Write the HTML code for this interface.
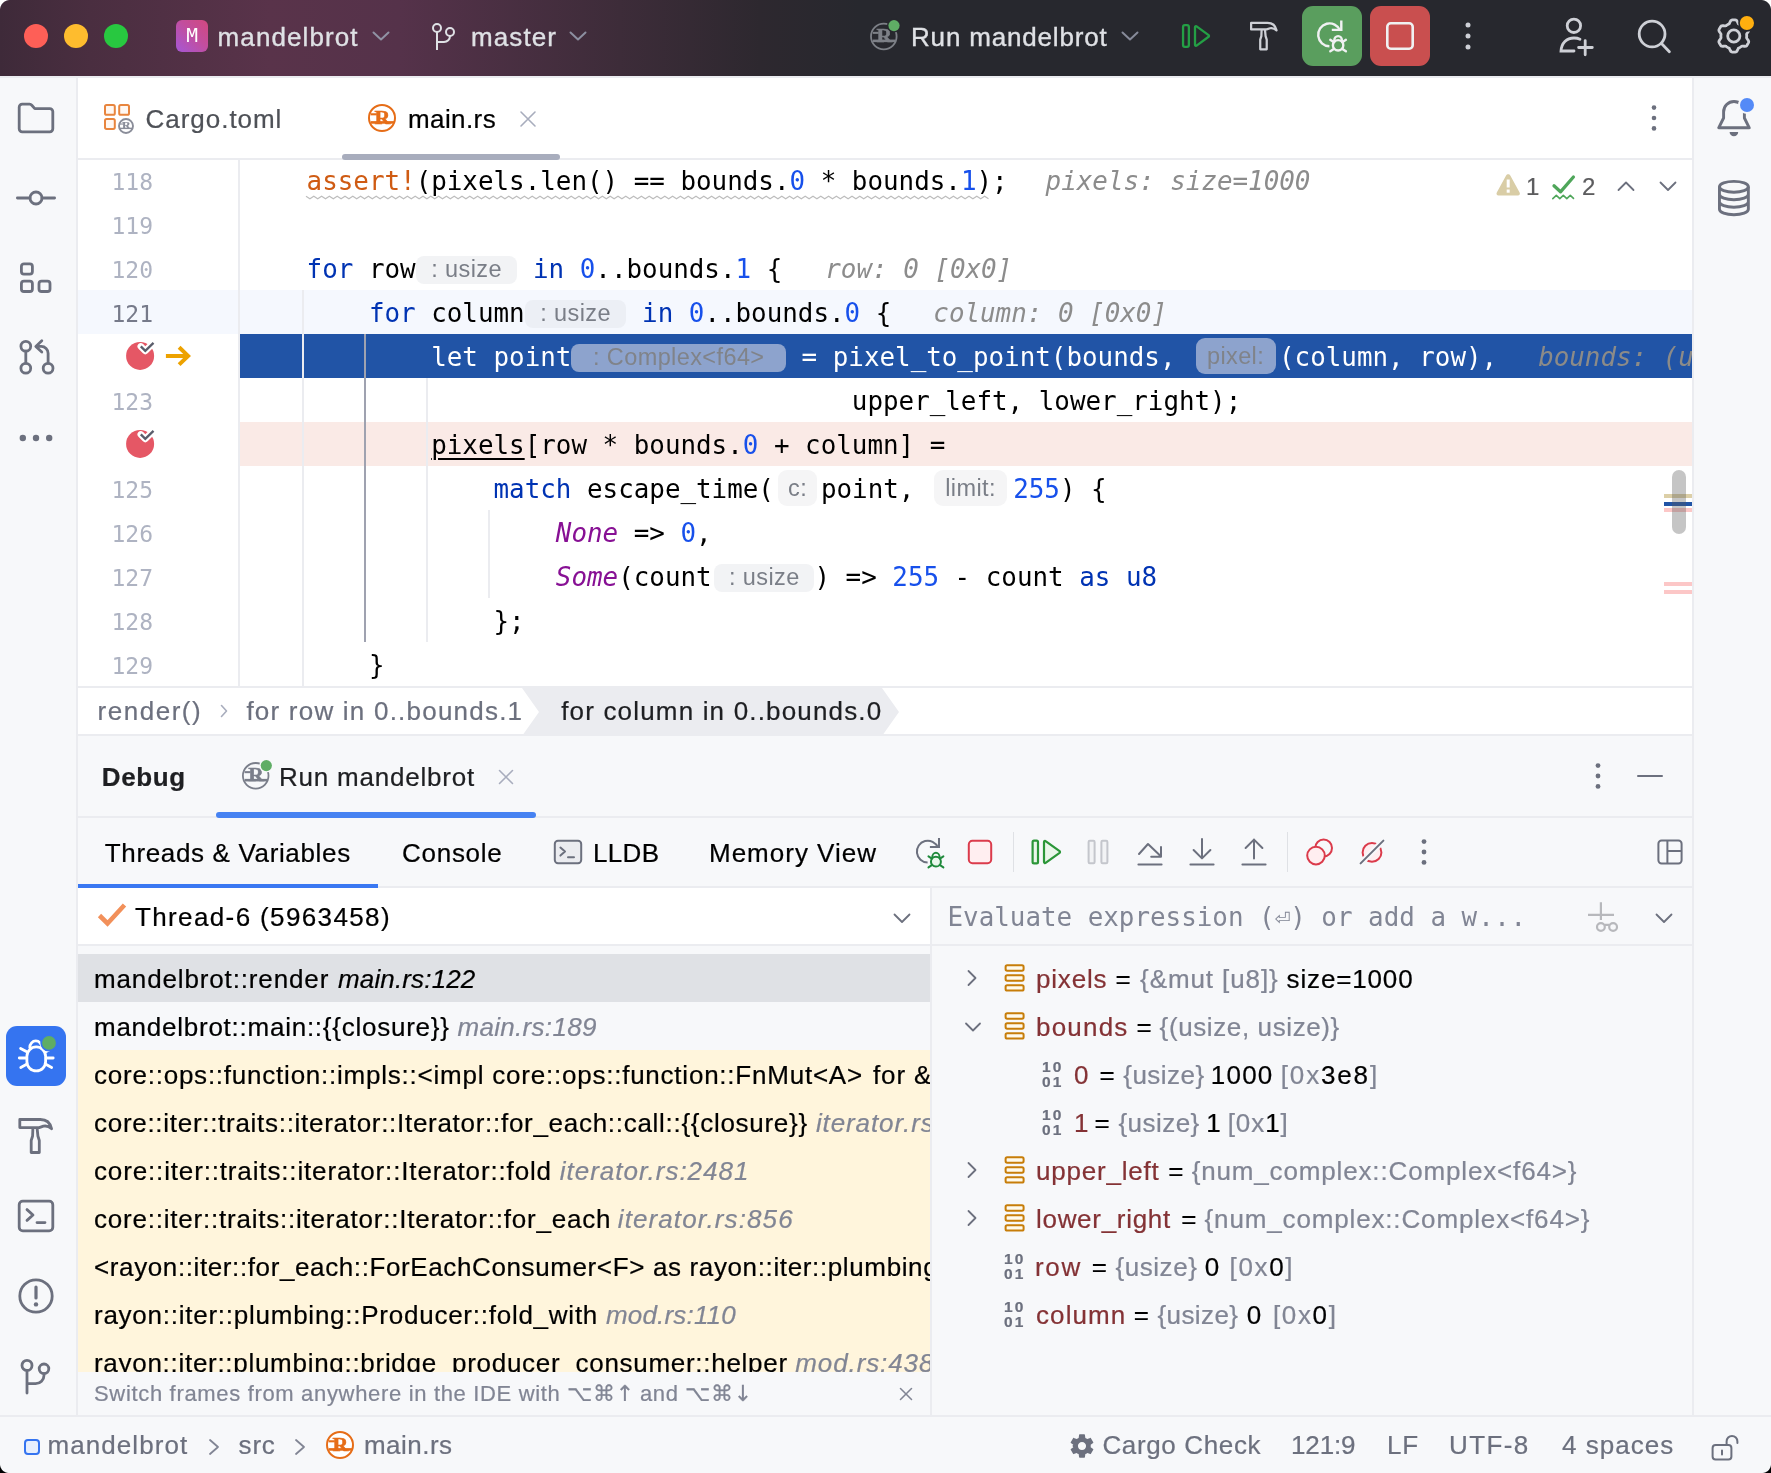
<!DOCTYPE html>
<html lang="en">
<head>
<meta charset="utf-8">
<title>mandelbrot – main.rs</title>
<style>
*{box-sizing:border-box;margin:0;padding:0}
html,body{width:1771px;height:1473px;overflow:hidden;background:#f7f8fa}
body{font-family:"Liberation Sans",sans-serif;font-size:26px;color:#000;position:relative;-webkit-text-stroke:.22px}
.abs{position:absolute}
svg{position:absolute;overflow:visible}
body>div{will-change:transform}
.t{position:absolute;white-space:pre;line-height:40px;height:40px;font-size:26px;letter-spacing:.9px}
.mono{font-family:"DejaVu Sans Mono","Liberation Mono",monospace;-webkit-text-stroke:0}
/* ---------- title bar ---------- */
#title{left:0;top:0;width:1771px;height:76px;background:#27282e;overflow:hidden}
#title .grad{left:0;top:0;width:900px;height:76px;background:linear-gradient(90deg,#3e2a39 0,#4a2e40 90px,#59334a 270px,#55324a 400px,#3d2c39 620px,#2d282f 760px,#27282e 860px)}
#title .t{color:#dfe1e5;-webkit-text-stroke:.35px}
/* ---------- strips ---------- */
#lstrip{left:0;top:76px;width:78px;height:1341px;background:#f7f8fa;border-right:2px solid #ebecf0}
#rstrip{left:1692px;top:76px;width:79px;height:1341px;background:#f7f8fa;border-left:2px solid #ebecf0}
/* ---------- editor tabs ---------- */
#tabs{z-index:3;left:78px;top:76px;width:1614px;height:84px;background:#fff;border-bottom:2px solid #ebecf0;border-top:2px solid #ebecf0}
/* ---------- editor ---------- */
#editor{left:78px;top:158px;width:1614px;height:530px;background:#fff;overflow:hidden;border-bottom:2px solid #ebecf0}
.row{position:absolute;left:0;width:1614px;height:44px}
.ln{position:absolute;right:1539px;top:2px;line-height:44px;font-size:23px;color:#aeb3c2;letter-spacing:0;white-space:pre}
.code{position:absolute;left:228.6px;top:1px;height:44px;line-height:44px;font-size:25.88px;white-space:pre;color:#000}
.kw{color:#0033b3}.num{color:#1750eb}.mac{color:#cf5b13}.en{color:#871094;font-style:italic}
.dbgv{color:#8c8c8c;font-style:italic}
.hint{display:inline-block;position:relative;height:28px;line-height:26px;top:9px;border-radius:8px;background:#f2f3f5;color:#7a7e87;font-family:"Liberation Sans",sans-serif;font-size:23.5px;letter-spacing:.4px;text-align:center;vertical-align:top;overflow:hidden}
.ph{height:36px;line-height:36px;top:3px;border-radius:9px;background:#f5f5f6}
.wavy{}
.guide{position:absolute;width:2px;background:#ebecf0}
/* ---------- breadcrumbs ---------- */
#crumbs{left:78px;top:688px;width:1614px;height:48px;background:#fff;border-bottom:2px solid #ebecf0}
/* ---------- debug ---------- */
#dhead{left:78px;top:736px;width:1614px;height:82px;background:#f7f8fa;border-bottom:2px solid #ebecf0}
#dtabs{left:78px;top:818px;width:1614px;height:70px;background:#f7f8fa;border-bottom:2px solid #ebecf0}
#frames{left:78px;top:888px;width:852px;height:529px;background:#f7f8fa;overflow:hidden}
#vars{left:930px;top:888px;width:762px;height:529px;background:#f7f8fa;border-left:2px solid #ebecf0;overflow:hidden}
.fr{position:absolute;left:0;width:852px;height:48px;line-height:48px;font-size:26px;letter-spacing:.9px;white-space:pre;padding-left:17px;padding-top:1px;overflow:hidden}
.fr i{color:#818594}
.lib{background:#fff5dc}
.vr{position:absolute;left:0;margin-top:1px;height:48px;line-height:48px;font-size:26px;letter-spacing:.9px;white-space:pre}
.vn{color:#843235}.vg{color:#818594}
.bin{position:absolute;font-family:"Liberation Sans",sans-serif;font-weight:bold;font-size:15.500px;line-height:15.600px;color:#6c707e;letter-spacing:2.200px;white-space:pre}
/* ---------- status ---------- */
#status{left:0;top:1415px;width:1771px;height:58px;background:#f7f8fa;border-top:2px solid #ebecf0}
#status .t{color:#6c707e}
.corner{position:absolute;width:10px;height:10px}
#t_proj{left:217.6px!important;letter-spacing:1.09px!important}
#t_branch{left:471.0px!important;letter-spacing:1.1px!important}
#t_run{left:911.0px!important;letter-spacing:0.82px!important}
#t_cargo{left:67.6px!important;letter-spacing:0.96px!important}
#t_main{left:330.0px!important;letter-spacing:0.4px!important}
#t_c1{left:19.6px!important;letter-spacing:1.51px!important}
#t_c2{left:168.4px!important;letter-spacing:1.22px!important}
#t_c3{left:483.2px!important;letter-spacing:1.17px!important}
#t_debug{left:23.8px!important;letter-spacing:0.6px!important}
#t_runm{left:201.0px!important;letter-spacing:0.79px!important}
#t_tv{left:26.8px!important;letter-spacing:0.65px!important}
#t_console{left:324.0px!important;letter-spacing:0.73px!important}
#t_lldb{left:515.0px!important;letter-spacing:0.32px!important}
#t_mem{left:631.0px!important;letter-spacing:1.0px!important}
#t_thread{left:57.0px!important;letter-spacing:1.37px!important}
#t_s1{left:47.6px!important;letter-spacing:1.05px!important}
#t_s2{left:238.6px!important;letter-spacing:0.8px!important}
#t_s3{left:364.0px!important;letter-spacing:0.46px!important}
#t_s4{left:1102.4px!important;letter-spacing:0.64px!important}
#t_s5{left:1291.0px!important;letter-spacing:-0.12px!important}
#t_s6{left:1387.0px!important;letter-spacing:0.9px!important}
#t_s7{left:1449.0px!important;letter-spacing:1.4px!important}
#t_s8{left:1562.0px!important;letter-spacing:1.01px!important}
#f1a{margin-left:-1.0px!important;letter-spacing:0.86px!important}
#f1b{margin-left:8.8px!important;letter-spacing:0.15px!important}
#f2a{margin-left:-1.0px!important;letter-spacing:0.75px!important}
#f2b{margin-left:7.9px!important;letter-spacing:0.3px!important}
#f3a{margin-left:-1.0px!important;letter-spacing:0.77px!important}
#f3b{margin-left:10.0px!important;letter-spacing:0.9px!important}
#f4a{margin-left:-1.0px!important;letter-spacing:0.71px!important}
#f4b{margin-left:8.1px!important;letter-spacing:0.9px!important}
#f5a{margin-left:-1.0px!important;letter-spacing:0.85px!important}
#f5b{margin-left:7.9px!important;letter-spacing:0.98px!important}
#f6a{margin-left:-1.0px!important;letter-spacing:0.78px!important}
#f6b{margin-left:6.6px!important;letter-spacing:1.1px!important}
#f7a{margin-left:-1.0px!important;letter-spacing:0.61px!important}
#f7b{margin-left:8.0px!important;letter-spacing:0.63px!important}
#f8a{margin-left:-1.0px!important;letter-spacing:0.75px!important}
#f8b{margin-left:7.9px!important;letter-spacing:0.18px!important}
#f9a{margin-left:-1.0px!important;letter-spacing:0.71px!important}
#f9b{margin-left:7.5px!important;letter-spacing:0.9px!important}
#v1a{margin-left:-2.0px!important;letter-spacing:0.8px!important}
#v1b{margin-left:8.2px!important;letter-spacing:0.9px!important}
#v1c{margin-left:8.5px!important;letter-spacing:0.9px!important}
#v1d{margin-left:8.0px!important;letter-spacing:0.84px!important}
#v2a{margin-left:-2.0px!important;letter-spacing:1.2px!important}
#v2b{margin-left:8.0px!important;letter-spacing:0.9px!important}
#v2c{margin-left:7.0px!important;letter-spacing:0.61px!important}
#v3a{margin-left:-2.0px!important;letter-spacing:0.9px!important}
#v3b{margin-left:10.0px!important;letter-spacing:0.9px!important}
#v3c{margin-left:7.8px!important;letter-spacing:0.48px!important}
#v3d{margin-left:6.1px!important;letter-spacing:1.23px!important}
#v3e{margin-left:7.2px!important;letter-spacing:1.85px!important}
#v4a{margin-left:-2.0px!important;letter-spacing:0.9px!important}
#v4b{margin-left:5.0px!important;letter-spacing:0.9px!important}
#v4c{margin-left:8.0px!important;letter-spacing:0.46px!important}
#v4d{margin-left:6.6px!important;letter-spacing:0.9px!important}
#v4e{margin-left:6.0px!important;letter-spacing:0.9px!important}
#v5a{margin-left:-2.0px!important;letter-spacing:0.79px!important}
#v5b{margin-left:8.6px!important;letter-spacing:0.9px!important}
#v5c{margin-left:7.4px!important;letter-spacing:0.85px!important}
#v6a{margin-left:-2.0px!important;letter-spacing:0.7px!important}
#v6b{margin-left:10.3px!important;letter-spacing:0.9px!important}
#v6c{margin-left:7.3px!important;letter-spacing:0.85px!important}
#v7a{margin-left:-3.0px!important;letter-spacing:1.65px!important}
#v7b{margin-left:10.0px!important;letter-spacing:0.9px!important}
#v7c{margin-left:7.5px!important;letter-spacing:0.56px!important}
#v7d{margin-left:7.2px!important;letter-spacing:0.9px!important}
#v7e{margin-left:9.6px!important;letter-spacing:1.65px!important}
#v8a{margin-left:-2.0px!important;letter-spacing:1.1px!important}
#v8b{margin-left:7.4px!important;letter-spacing:0.9px!important}
#v8c{margin-left:7.6px!important;letter-spacing:0.4px!important}
#v8d{margin-left:8.3px!important;letter-spacing:0.9px!important}
#v8e{margin-left:10.9px!important;letter-spacing:1.65px!important}
#t_hint{left:16.0px!important;letter-spacing:0.67px!important}
#f7b{letter-spacing:.63px!important}
</style>
</head>
<body>
<div id="title" class="abs">
 <div class="grad abs"></div>
 <div class="abs" style="left:24px;top:24px;width:24px;height:24px;border-radius:50%;background:#fe5f57"></div>
 <div class="abs" style="left:64px;top:24px;width:24px;height:24px;border-radius:50%;background:#febc2e"></div>
 <div class="abs" style="left:104px;top:24px;width:24px;height:24px;border-radius:50%;background:#28c840"></div>
 <div class="abs mono" style="left:176px;top:20px;width:32px;height:32px;border-radius:6px;background:linear-gradient(45deg,#a557d6 0,#c24e9e 55%,#d1487f 100%);color:#fff;font-size:19.500px;line-height:32px;text-align:center">M</div>
 <div class="t" id="t_proj" style="left:218px;top:17px">mandelbrot</div>
 <svg style="left:372px;top:29px" width="18" height="14" viewBox="0 0 18 14"><path d="M1.5 3.5 9 10.5 16.5 3.5" fill="none" stroke="#9092a4" stroke-width="2" stroke-linecap="round" stroke-linejoin="round"/></svg>
 <svg style="left:428px;top:20px" width="32" height="32" viewBox="0 0 16 16"><g fill="none" stroke="#dfe1e5" stroke-width="1"><circle cx="4.5" cy="4" r="2"/><circle cx="11" cy="6" r="2"/><path d="M4.5 6v9M4.5 11h3.5a3 3 0 0 0 3-3"/></g></svg>
 <div class="t" id="t_branch" style="left:472px;top:17px">master</div>
 <svg style="left:569px;top:29px" width="18" height="14" viewBox="0 0 18 14"><path d="M1.5 3.5 9 10.5 16.5 3.5" fill="none" stroke="#8c8fa0" stroke-width="2" stroke-linecap="round" stroke-linejoin="round"/></svg>
 <!-- run config -->
 <svg style="left:868px;top:20px" width="34" height="34" viewBox="868 20 34 34"><circle cx="883.8" cy="36.5" r="12.8" fill="none" stroke="#7d8087" stroke-width="1.8"/><text transform="translate(884.184 42.196) scale(1.120 1)" font-family="Liberation Serif,serif" font-weight="bold" font-size="19.2" text-anchor="middle" fill="#7d8087" stroke="#7d8087" stroke-width="0.448">R</text><path d="M872.792 40.852H895.576" stroke="#7d8087" stroke-width="2.56"/><path d="M872.792 32.852H878.68" stroke="#7d8087" stroke-width="2.048"/><circle cx="894" cy="25.600" r="7" fill="#27282e"/><circle cx="894" cy="25.600" r="5.600" fill="#5fad65"/></svg>
 <div class="t" id="t_run" style="left:912px;top:17px">Run mandelbrot</div>
 <svg style="left:1121px;top:29px" width="18" height="14" viewBox="0 0 18 14"><path d="M1.5 3.5 9 10.5 16.5 3.5" fill="none" stroke="#868a99" stroke-width="2" stroke-linecap="round" stroke-linejoin="round"/></svg>
 <svg style="left:1178px;top:20px" width="36" height="32" viewBox="1178 20 36 32"><g fill="none" stroke="#249f45" stroke-width="2.300" stroke-linejoin="round"><rect x="1183.050" y="25.150" width="5.800" height="21.700" rx="1.800"/><path d="M1195 27.200V44.800a1 1 0 0 0 1.600.800L1208.600 36.800a1 1 0 0 0 0-1.600L1196.600 26.400a1 1 0 0 0-1.600.800Z"/></g></svg>
 <svg style="left:1246px;top:18px" width="36" height="36" viewBox="1246 18 36 36"><g transform="translate(1250 21.7) scale(0.8)" fill="none" stroke="#ced0d6" stroke-width="2.8" stroke-linejoin="round"><path d="M1.4 1.5H22C28.5 1.5 32 5.500 33.200 10.800C30.500 8.300 27.500 7.600 25 8.200L20.800 9.600H1.400Z"/><path d="M14.500 10L14.200 18L12.800 22.500V34.500H20.900V22.500L19.500 18L18.700 10"/></g></svg>
 <div class="abs" style="left:1302px;top:6px;width:60px;height:60px;border-radius:11px;background:#5a9e5e"></div>
 <svg style="left:1312px;top:16px" width="40" height="40" viewBox="1312 16 40 40"><g transform="translate(1329.6 34.8) scale(1)" fill="none" stroke-width="2.4" stroke-linecap="butt" stroke-linejoin="miter"><path d="M10.500 -4.400A11.400 11.400 0 1 0 -0.200 11.400" stroke="#f0f1f2"/><path d="M11.700 -14.200V-4.900H2.200" stroke="#f0f1f2"/><g stroke="#f0f1f2" stroke-linecap="round"><circle cx="8.500" cy="10.500" r="5.200" fill="none"/><path d="M4.700 6.600V5.600A3.800 4.300 0 0 1 12.300 5.600V6.600"/><path d="M0.700 5L4.300 7.400M16.300 5L12.700 7.400M0.700 16.500L4.600 13.900M16.300 16.500L12.400 13.900"/></g></g></svg>
 <div class="abs" style="left:1370px;top:6px;width:60px;height:60px;border-radius:11px;background:#c94f4f"></div>
 <svg style="left:1380px;top:16px" width="40" height="40" viewBox="1380 16 40 40"><rect x="1387.300" y="23.300" width="25.400" height="25.400" rx="3.500" fill="none" stroke="#f0f1f2" stroke-width="2.600"/></svg>
 <svg style="left:1460px;top:18px" width="16" height="36" viewBox="1460 18 16 36"><g fill="#ced0d6"><circle cx="1468" cy="25" r="2.500"/><circle cx="1468" cy="36" r="2.500"/><circle cx="1468" cy="47" r="2.500"/></g></svg>
 <svg style="left:1554px;top:14px" width="44" height="46" viewBox="1554 14 44 46"><g fill="none" stroke="#ced0d6" stroke-width="2.800" stroke-linecap="round"><circle cx="1573.900" cy="25.800" r="6.700"/><path d="M1574 51H1561c.500-8 5.500-13 13-13c2.300 0 4.300.400 6 1.200M1585.200 40.600V54.800M1578.600 47.500H1592.300"/></g></svg>
 <svg style="left:1634px;top:16px" width="42" height="42" viewBox="1634 16 42 42"><g fill="none" stroke="#ced0d6" stroke-width="2.800" stroke-linecap="round"><circle cx="1652.100" cy="34" r="12.900"/><path d="M1661.500 43.500L1669.400 51.700"/></g></svg>
 <svg style="left:1712px;top:12px" width="48" height="48" viewBox="1712 12 48 48"><g fill="none" stroke="#ced0d6" stroke-width="2.800" stroke-linejoin="round"><path d="M1746.7 36L1746.69 35.44L1746.65 34.88L1746.59 34.32L1746.74 33.72L1747.27 33.01L1747.81 32.25L1748.3 31.43L1748.7 30.58L1748.67 29.84L1748.39 29.2L1748.08 28.57L1747.74 27.95L1747.38 27.35L1746.99 26.77L1746.57 26.2L1745.95 25.81L1745.01 25.73L1744.05 25.75L1743.12 25.83L1742.25 25.93L1741.65 25.77L1741.2 25.43L1740.73 25.12L1740.25 24.83L1739.76 24.56L1739.25 24.31L1738.74 24.08L1738.29 23.65L1737.95 22.84L1737.55 21.99L1737.09 21.16L1736.55 20.38L1735.9 20.04L1735.2 19.96L1734.5 19.92L1733.8 19.9L1733.1 19.92L1732.4 19.96L1731.7 20.04L1731.05 20.38L1730.51 21.16L1730.05 21.99L1729.65 22.84L1729.31 23.65L1728.86 24.08L1728.35 24.31L1727.84 24.56L1727.35 24.83L1726.87 25.12L1726.4 25.43L1725.95 25.77L1725.35 25.93L1724.48 25.83L1723.55 25.75L1722.59 25.73L1721.65 25.81L1721.03 26.2L1720.61 26.77L1720.22 27.35L1719.86 27.95L1719.52 28.57L1719.21 29.2L1718.93 29.84L1718.9 30.58L1719.3 31.43L1719.79 32.25L1720.33 33.01L1720.86 33.72L1721.01 34.32L1720.95 34.88L1720.91 35.44L1720.9 36L1720.91 36.56L1720.95 37.12L1721.01 37.68L1720.86 38.28L1720.33 38.99L1719.79 39.75L1719.3 40.57L1718.9 41.42L1718.93 42.16L1719.21 42.8L1719.52 43.43L1719.86 44.05L1720.22 44.65L1720.61 45.23L1721.03 45.8L1721.65 46.19L1722.59 46.27L1723.55 46.25L1724.48 46.17L1725.35 46.07L1725.95 46.23L1726.4 46.57L1726.87 46.88L1727.35 47.17L1727.84 47.44L1728.35 47.69L1728.86 47.92L1729.31 48.35L1729.65 49.16L1730.05 50.01L1730.51 50.84L1731.05 51.62L1731.7 51.96L1732.4 52.04L1733.1 52.08L1733.8 52.1L1734.5 52.08L1735.2 52.04L1735.9 51.96L1736.55 51.62L1737.09 50.84L1737.55 50.01L1737.95 49.16L1738.29 48.35L1738.74 47.92L1739.25 47.69L1739.76 47.44L1740.25 47.17L1740.73 46.88L1741.2 46.57L1741.65 46.23L1742.25 46.07L1743.12 46.17L1744.05 46.25L1745.01 46.27L1745.95 46.19L1746.57 45.8L1746.99 45.23L1747.38 44.65L1747.74 44.05L1748.08 43.43L1748.39 42.8L1748.67 42.16L1748.7 41.42L1748.3 40.57L1747.81 39.75L1747.27 38.99L1746.74 38.28L1746.59 37.68L1746.65 37.12L1746.69 36.56Z"/><circle cx="1733.800" cy="36" r="6.100"/></g><circle cx="1746.900" cy="23" r="8.700" fill="#27282e"/><circle cx="1746.900" cy="23" r="7.100" fill="#ffaf0f"/></svg>
</div>
<div id="lstrip" class="abs">
 <!-- icons are 40x40 boxes centred at x=36; top is relative to strip (y-76) -->
 <svg style="left:16px;top:22px" width="40" height="40" viewBox="0 0 20 20"><path d="M1.600 4.600a1.500 1.500 0 0 1 1.500-1.500h3.700a1.500 1.500 0 0 1 1.100.500l1.500 1.700h7.500a1.500 1.500 0 0 1 1.500 1.500v8.600a1.500 1.500 0 0 1-1.500 1.500H3.100a1.500 1.500 0 0 1-1.500-1.500z" fill="none" stroke="#6c707e" stroke-width="1.400" stroke-linejoin="round"/></svg>
 <svg style="left:16px;top:102px" width="40" height="40" viewBox="0 0 20 20"><g fill="none" stroke="#6c707e" stroke-width="1.400" stroke-linecap="round"><circle cx="10" cy="10" r="3"/><path d="M.700 10H7M13 10h6.300"/></g></svg>
 <svg style="left:16px;top:182px" width="40" height="40" viewBox="0 0 20 20"><g fill="none" stroke="#6c707e" stroke-width="1.400"><rect x="2.700" y="2.900" width="5.500" height="5.200" rx="1.300"/><rect x="2.700" y="11.550" width="5.500" height="5.200" rx="1.300"/><rect x="11.500" y="11.550" width="5.500" height="5.200" rx="1.300"/></g></svg>
 <svg style="left:16px;top:262px" width="40" height="40" viewBox="0 0 20 20"><g fill="none" stroke="#6c707e" stroke-width="1.400" stroke-linecap="round" stroke-linejoin="round"><circle cx="4.900" cy="4.100" r="2.450"/><circle cx="4.900" cy="15.100" r="2.450"/><circle cx="16.050" cy="15.100" r="2.450"/><path d="M4.900 6.600v6M16.050 12.600V7.600a3.400 3.400 0 0 0-3.400-3.400H10.300M12.900 1.400l-3 2.800 3 2.800"/></g></svg>
 <svg style="left:16px;top:342px" width="40" height="40" viewBox="0 0 20 20"><g fill="#6c707e"><circle cx="3.400" cy="10" r="1.600"/><circle cx="10" cy="10" r="1.600"/><circle cx="16.600" cy="10" r="1.600"/></g></svg>
 <!-- debug (active) -->
 <div class="abs" style="left:6px;top:950px;width:60px;height:60px;border-radius:11px;background:#3574f0"></div>
 <svg style="left:12px;top:956px" width="48" height="48" viewBox="12 1032 48 48"><g fill="none" stroke="#fff" stroke-width="2.800" stroke-linecap="round" stroke-linejoin="round"><rect x="26.900" y="1046.900" width="18.700" height="24" rx="9.350"/><path d="M29.800 1047.500A6 6.600 0 0 1 41.800 1047.500"/><path d="M19.300 1058H26M46.500 1058H53.200M20.600 1048.500L26.300 1051.600M51.800 1048.500L46.200 1051.600M20.800 1067.500L26.600 1064.300M51.600 1067.500L45.800 1064.300"/></g><circle cx="49" cy="1042.900" r="8.700" fill="#3574f0"/><circle cx="49" cy="1042.900" r="6.900" fill="#5fad65"/></svg>
 <svg style="left:14px;top:1038px" width="44" height="44" viewBox="14 1114 44 44"><g transform="translate(18.4 1118) scale(1)" fill="none" stroke="#6c707e" stroke-width="2.8" stroke-linejoin="round"><path d="M1.4 1.5H22C28.5 1.5 32 5.500 33.200 10.800C30.500 8.300 27.500 7.600 25 8.200L20.800 9.600H1.400Z"/><path d="M14.500 10L14.200 18L12.800 22.500V34.500H20.900V22.500L19.500 18L18.700 10"/></g></svg>
 <svg style="left:16px;top:1120px" width="40" height="40" viewBox="0 0 20 20"><g fill="none" stroke="#6c707e" stroke-width="1.400" stroke-linecap="round" stroke-linejoin="round"><rect x="1.600" y="2.600" width="16.800" height="14.800" rx="1.800"/><path d="M5.500 6.800l3 2.700-3 2.700M10.500 13.300h4"/></g></svg>
 <svg style="left:16px;top:1200px" width="40" height="40" viewBox="0 0 20 20"><circle cx="10" cy="10" r="8.100" fill="none" stroke="#6c707e" stroke-width="1.400"/><path d="M10 5.500v5.500" stroke="#6c707e" stroke-width="1.600" stroke-linecap="round"/><circle cx="10" cy="14.200" r="1.100" fill="#6c707e"/></svg>
 <svg style="left:16px;top:1280px" width="40" height="40" viewBox="0 0 20 20"><g fill="none" stroke="#6c707e" stroke-width="1.400" stroke-linecap="round"><circle cx="5.500" cy="4.700" r="2.500"/><circle cx="14" cy="6.400" r="2.400"/><path d="M5.500 7.200v11.300M5.500 13.800h4.300a4.200 4.200 0 0 0 4.200-4.200V8.800"/></g></svg>
</div>
<div id="rstrip" class="abs">
 <svg style="left:18px;top:20px" width="44" height="44" viewBox="1712 96 44 44"><g fill="none" stroke="#6c707e" stroke-width="2.900" stroke-linejoin="round"><path d="M1723.600 118V111.900A10.400 10.400 0 0 1 1744.400 111.900V118L1749.300 127.800H1718.700Z"/></g><path d="M1729.600 132H1738.200A4.300 4.300 0 0 1 1729.600 132Z" fill="#6c707e"/><circle cx="1747" cy="105" r="9" fill="#f7f8fa"/><circle cx="1747" cy="105" r="7" fill="#548af7"/></svg>
 <svg style="left:20px;top:100px" width="40" height="44" viewBox="1714 176 40 44"><g fill="none" stroke="#6c707e" stroke-width="2.900"><ellipse cx="1733.900" cy="186.800" rx="14.450" ry="5.400"/><path d="M1719.450 186.800V209.300a14.450 5.400 0 0 0 28.900 0V186.800M1719.450 194.300a14.450 5.400 0 0 0 28.900 0M1719.450 201.800a14.450 5.400 0 0 0 28.900 0"/></g></svg>
</div>
<div id="tabs" class="abs">
 <!-- Cargo.toml icon -->
 <svg style="left:24px;top:24px" width="34" height="34" viewBox="102 102 34 34"><g fill="#fff7f1" stroke="#e8853e" stroke-width="2"><rect x="105" y="105" width="9.800" height="9.800" rx="1.600"/><rect x="119.200" y="105" width="9.800" height="9.800" rx="1.600"/><rect x="105" y="119.100" width="9.800" height="9.800" rx="1.600"/></g><circle cx="126" cy="126" r="9.500" fill="#fff"/><circle cx="126" cy="126" r="7" fill="#fff" stroke="#8a8d99" stroke-width="1.9"/><text transform="translate(126.21 129.115) scale(1.120 1)" font-family="Liberation Serif,serif" font-weight="bold" font-size="10.5" text-anchor="middle" fill="#8a8d99" stroke="#8a8d99" stroke-width="0.245">R</text><path d="M119.98 128.38H132.44" stroke="#8a8d99" stroke-width="1.4"/><path d="M119.98 124.005H123.2" stroke="#8a8d99" stroke-width="1.12"/></svg>
 <div class="t" id="t_cargo" style="left:68px;top:21px;color:#4e5157">Cargo.toml</div>
 <!-- main.rs icon -->
 <svg style="left:288px;top:24px" width="32" height="32" viewBox="366 102 32 32"><circle cx="382" cy="118" r="13" fill="#fff" stroke="#e66d17" stroke-width="2"/><text transform="translate(382.39 123.785) scale(1.120 1)" font-family="Liberation Serif,serif" font-weight="bold" font-size="19.5" text-anchor="middle" fill="#e66d17" stroke="#e66d17" stroke-width="0.455">R</text><path d="M370.82 122.42H393.96" stroke="#e66d17" stroke-width="2.6"/><path d="M370.82 114.295H376.8" stroke="#e66d17" stroke-width="2.08"/></svg>
 <div class="t" id="t_main" style="left:330px;top:21px">main.rs</div>
 <svg style="left:441px;top:32px" width="18" height="18" viewBox="0 0 18 18"><path d="M2 2l14 14M16 2L2 16" stroke="#a8adbd" stroke-width="1.600" stroke-linecap="round"/></svg>
 <div class="abs" style="left:264px;top:76px;width:218px;height:6px;border-radius:3px;background:#a8adbd"></div>
 <svg style="left:1556px;top:19.800px" width="40" height="40" viewBox="0 0 20 20"><g fill="#6c707e"><circle cx="10" cy="4.800" r="1.150"/><circle cx="10" cy="10" r="1.150"/><circle cx="10" cy="15.200" r="1.150"/></g></svg>
</div>
<div id="editor" class="abs">
 <!-- row backgrounds -->
 <div class="abs" style="left:0;top:132px;width:1614px;height:44px;background:#f5f8fe"></div>
 <div class="abs" style="left:162px;top:176px;width:1452px;height:44px;background:#2154a6"></div>
 <div class="abs" style="left:162px;top:264px;width:1452px;height:44px;background:#faeae6"></div>
 <!-- gutter separator -->
 <div class="abs" style="left:160px;top:0;width:2px;height:529px;background:#ebecf0"></div>
 <!-- indent guides -->
 <div class="guide" style="left:224px;top:132px;height:396px"></div>
 <div class="guide" style="left:286px;top:176px;height:308px;background:#9fa2b0"></div>
 <div class="guide" style="left:348px;top:220px;height:264px"></div>
 <div class="guide" style="left:410px;top:352px;height:88px"></div>

 <!--WAVE--><svg style="left:0;top:0" width="1000" height="44" viewBox="0 0 1000 44"><path d="M228 38.2L231.9 40.8L235.8 38.2L239.7 40.8L243.6 38.2L247.5 40.8L251.4 38.2L255.3 40.8L259.2 38.2L263.1 40.8L267 38.2L270.9 40.8L274.8 38.2L278.7 40.8L282.6 38.2L286.5 40.8L290.4 38.2L294.3 40.8L298.2 38.2L302.1 40.8L306 38.2L309.9 40.8L313.8 38.2L317.7 40.8L321.6 38.2L325.5 40.8L329.4 38.2L333.3 40.8L337.2 38.2L341.1 40.8L345 38.2L348.9 40.8L352.8 38.2L356.7 40.8L360.6 38.2L364.5 40.8L368.4 38.2L372.3 40.8L376.2 38.2L380.1 40.8L384 38.2L387.9 40.8L391.8 38.2L395.7 40.8L399.6 38.2L403.5 40.8L407.4 38.2L411.3 40.8L415.2 38.2L419.1 40.8L423 38.2L426.9 40.8L430.8 38.2L434.7 40.8L438.6 38.2L442.5 40.8L446.4 38.2L450.3 40.8L454.2 38.2L458.1 40.8L462 38.2L465.9 40.8L469.8 38.2L473.7 40.8L477.6 38.2L481.5 40.8L485.4 38.2L489.3 40.8L493.2 38.2L497.1 40.8L501 38.2L504.9 40.8L508.8 38.2L512.7 40.8L516.6 38.2L520.5 40.8L524.4 38.2L528.3 40.8L532.2 38.2L536.1 40.8L540 38.2L543.9 40.8L547.8 38.2L551.7 40.8L555.6 38.2L559.5 40.8L563.4 38.2L567.3 40.8L571.2 38.2L575.1 40.8L579 38.2L582.9 40.8L586.8 38.2L590.7 40.8L594.6 38.2L598.5 40.8L602.4 38.2L606.3 40.8L610.2 38.2L614.1 40.8L618 38.2L621.9 40.8L625.8 38.2L629.7 40.8L633.6 38.2L637.5 40.8L641.4 38.2L645.3 40.8L649.2 38.2L653.1 40.8L657 38.2L660.9 40.8L664.8 38.2L668.7 40.8L672.6 38.2L676.5 40.8L680.4 38.2L684.3 40.8L688.2 38.2L692.1 40.8L696 38.2L699.9 40.8L703.8 38.2L707.7 40.8L711.6 38.2L715.5 40.8L719.4 38.2L723.3 40.8L727.2 38.2L731.1 40.8L735 38.2L738.9 40.8L742.8 38.2L746.7 40.8L750.6 38.2L754.5 40.8L758.4 38.2L762.3 40.8L766.2 38.2L770.1 40.8L774 38.2L777.9 40.8L781.8 38.2L785.7 40.8L789.6 38.2L793.5 40.8L797.4 38.2L801.3 40.8L805.2 38.2L809.1 40.8L813 38.2L816.9 40.8L820.8 38.2L824.7 40.8L828.6 38.2L832.5 40.8L836.4 38.2L840.3 40.8L844.2 38.2L848.1 40.8L852 38.2L855.9 40.8L859.8 38.2L863.7 40.8L867.6 38.2L871.5 40.8L875.4 38.2L879.3 40.8L883.2 38.2L887.1 40.8L891 38.2L894.9 40.8L898.8 38.2L902.7 40.8L906.6 38.2L910.5 40.8" fill="none" stroke="#bdbdbd" stroke-width="1.1"/></svg>
 <div class="row" style="top:0"><span class="ln mono">118</span><div class="code mono"><span class="wavy"><span class="mac">assert!</span>(pixels.len() == bounds.<span class="num">0</span> * bounds.<span class="num">1</span>)</span>;<span class="dbgv" style="margin-left:38px">pixels: size=1000</span></div></div>
 <div class="row" style="top:44px"><span class="ln mono">119</span></div>
 <div class="row" style="top:88px"><span class="ln mono">120</span><div class="code mono"><span class="kw">for</span> row<span class="hint" style="width:101.800px">: usize</span> <span class="kw">in</span> <span class="num">0</span>..bounds.<span class="num">1</span> {<span class="dbgv" style="margin-left:43px">row: 0 [0x0]</span></div></div>
 <div class="row" style="top:132px"><span class="ln mono" style="color:#767a8a">121</span><div class="code mono">    <span class="kw">for</span> column<span class="hint" style="width:101.800px;background:#eceff5">: usize</span> <span class="kw">in</span> <span class="num">0</span>..bounds.<span class="num">0</span> {<span class="dbgv" style="margin-left:42px">column: 0 [0x0]</span></div></div>
 <div class="row" style="top:176px"><div class="code mono" style="color:#fff">        let point<span class="hint" style="width:214.600px;background:#8da3cd;color:#808389">: Complex&lt;f64&gt;</span> = pixel_to_point(bounds, <span class="hint ph" style="width:80px;margin:0 3.500px 0 4.500px;background:#8da3cd;color:#808389">pixel:</span>(column, row),<span class="dbgv" style="margin-left:41px;color:#8c8b88">bounds: (usize, usize)</span></div></div>
 <div class="row" style="top:220px"><span class="ln mono">123</span><div class="code mono">                                   upper_left, lower_right);</div></div>
 <div class="row" style="top:264px"><div class="code mono">        <span style="text-decoration:underline;text-decoration-thickness:1.500px;text-underline-offset:4px">pixels</span>[row * bounds.<span class="num">0</span> + column] =</div></div>
 <div class="row" style="top:308px"><span class="ln mono">125</span><div class="code mono">            <span class="kw">match</span> escape_time(<span class="hint ph" style="width:39.400px;margin:0 3.600px 0 4px">c:</span>point, <span class="hint ph" style="width:73.200px;margin:0 6px 0 4px">limit:</span><span class="num">255</span>) {</div></div>
 <div class="row" style="top:352px"><span class="ln mono">126</span><div class="code mono">                <span class="en">None</span> =&gt; <span class="num">0</span>,</div></div>
 <div class="row" style="top:396px"><span class="ln mono">127</span><div class="code mono">                <span class="en">Some</span>(count<span class="hint" style="width:100.300px;margin-left:2.500px">: usize</span>) =&gt; <span class="num">255</span> - count <span class="kw">as</span> <span class="kw">u8</span></div></div>
 <div class="row" style="top:440px"><span class="ln mono">128</span><div class="code mono">            };</div></div>
 <div class="row" style="top:484px"><span class="ln mono">129</span><div class="code mono">    }</div></div>

 <!-- breakpoints -->
 <svg style="left:44px;top:178px" width="36" height="40" viewBox="122 336 36 40"><circle cx="140.1" cy="355.9" r="14" fill="#e55765"/><path d="M140.8 346.4l4.500 4.500l8.200 -8" fill="none" stroke="#fff" stroke-width="6.600" stroke-linecap="round" stroke-linejoin="round"/><path d="M140.8 346.4l4.500 4.500l8.200 -8" fill="none" stroke="#5a5d6b" stroke-width="2.300" stroke-linecap="butt" stroke-linejoin="miter"/></svg>
 <svg style="left:84px;top:184px" width="32" height="28" viewBox="162 342 32 28"><path d="M165.900 355.900H187.200M179.100 347.200L188.100 355.900L179.100 364.600" fill="none" stroke="#eda200" stroke-width="4" stroke-linejoin="miter"/></svg>
 <svg style="left:44px;top:266px" width="36" height="40" viewBox="122 424 36 40"><circle cx="140.1" cy="443.9" r="14" fill="#e55765"/><path d="M140.8 434.4l4.500 4.500l8.200 -8" fill="none" stroke="#fff" stroke-width="6.600" stroke-linecap="round" stroke-linejoin="round"/><path d="M140.8 434.4l4.500 4.500l8.200 -8" fill="none" stroke="#5a5d6b" stroke-width="2.300" stroke-linecap="butt" stroke-linejoin="miter"/></svg>

 <!-- inspections widget -->
 <svg style="left:1416px;top:14px" width="28" height="26" viewBox="1494 172 28 26"><path d="M1508.200 174.200c1 0 1.600.500 2.100 1.400l9.300 17c.800 1.500 0 2.900-1.700 2.900h-19.400c-1.700 0-2.500-1.400-1.700-2.900l9.300-17c.500-.900 1.100-1.400 2.100-1.400z" fill="#d9cda6"/><path d="M1508.200 179.500v8" stroke="#fff" stroke-width="3"/><rect x="1506.700" y="189.500" width="3" height="3.200" fill="#fff"/></svg>
 <div class="t" style="left:1448px;top:9px;font-size:24px;color:#5c5c5e;letter-spacing:0">1</div>
 <svg style="left:1472px;top:14px" width="28" height="30" viewBox="1550 172 28 30"><path d="M1554 185.800l6.500 6L1573.400 177" fill="none" stroke="#4fa65a" stroke-width="3.300" stroke-linecap="round" stroke-linejoin="round"/><path d="M1552.800 198.700l3.500-3.300 3.500 3.300 3.500-3.300 3.500 3.300 3.500-3.300 3.200 3" fill="none" stroke="#4fa65a" stroke-width="1.600" stroke-linecap="round" stroke-linejoin="round"/></svg>
 <div class="t" style="left:1504px;top:9px;font-size:24px;color:#5c5c5e;letter-spacing:0">2</div>
 <svg style="left:1539px;top:22px" width="18" height="12" viewBox="0 0 18 12"><path d="M1.500 10 9 2.500 16.500 10" fill="none" stroke="#6c707e" stroke-width="1.800" stroke-linecap="round" stroke-linejoin="round"/></svg>
 <svg style="left:1581px;top:22px" width="18" height="12" viewBox="0 0 18 12"><path d="M1.500 2.500 9 10 16.500 2.500" fill="none" stroke="#6c707e" stroke-width="1.800" stroke-linecap="round" stroke-linejoin="round"/></svg>

 <!-- error stripe & scrollbar -->
 <div class="abs" style="left:1586px;top:336px;width:28px;height:4px;background:#dccfa7"></div>
 <div class="abs" style="left:1586px;top:344px;width:28px;height:4px;background:#2154a6"></div>
 <div class="abs" style="left:1586px;top:350px;width:28px;height:4px;background:#fcc7c7"></div>
 <div class="abs" style="left:1586px;top:424px;width:28px;height:4px;background:#fcc7c7"></div>
 <div class="abs" style="left:1586px;top:432px;width:28px;height:4px;background:#fcc7c7"></div>
 <div class="abs" style="left:1594px;top:312px;width:14px;height:64px;border-radius:7px;background:rgba(90,90,90,.35)"></div>
</div>
<div id="crumbs" class="abs">
 <svg style="left:444px;top:0" width="380" height="48" viewBox="0 0 380 48"><path d="M0 0h360l17 24-17 24H0l17-24z" fill="#ebecf0"/></svg>
 <div class="t" id="t_c1" style="left:20px;top:3px;color:#6c707e">render()</div>
 <svg style="left:141px;top:15px" width="10" height="16" viewBox="0 0 10 16"><path d="M2.500 2.500l5 5.500-5 5.500" fill="none" stroke="#a8adbd" stroke-width="1.600" stroke-linecap="round" stroke-linejoin="round"/></svg>
 <div class="t" id="t_c2" style="left:168px;top:3px;color:#6c707e">for row in 0..bounds.1</div>
 <div class="t" id="t_c3" style="left:482px;top:3px;color:#1e1f22">for column in 0..bounds.0</div>
</div>
<div id="dhead" class="abs">
 <div class="t" id="t_debug" style="left:24px;top:21px;font-weight:bold;color:#1e1f22">Debug</div>
 <svg style="left:162px;top:20px" width="34" height="34" viewBox="240 756 34 34"><circle cx="255.7" cy="775.8" r="12.8" fill="none" stroke="#7a7e8a" stroke-width="1.8"/><text transform="translate(256.084 781.496) scale(1.120 1)" font-family="Liberation Serif,serif" font-weight="bold" font-size="19.2" text-anchor="middle" fill="#7a7e8a" stroke="#7a7e8a" stroke-width="0.448">R</text><path d="M244.692 780.152H267.476" stroke="#7a7e8a" stroke-width="2.56"/><path d="M244.692 772.152H250.58" stroke="#7a7e8a" stroke-width="2.048"/><circle cx="266.300" cy="765.600" r="7" fill="#f7f8fa"/><circle cx="266.300" cy="765.600" r="5.600" fill="#5fad65"/></svg>
 <div class="t" id="t_runm" style="left:202px;top:21px;color:#1e1f22">Run mandelbrot</div>
 <svg style="left:420px;top:33px" width="16" height="16" viewBox="0 0 16 16"><path d="M1.500 1.500l13 13M14.500 1.500l-13 13" stroke="#a8adbd" stroke-width="1.600" stroke-linecap="round"/></svg>
 <div class="abs" style="left:138px;top:75.5px;width:320px;height:6.500px;border-radius:3.200px;background:#4682f2"></div>
 <svg style="left:1500px;top:20px" width="40" height="40" viewBox="0 0 20 20"><g fill="#6c707e"><circle cx="10" cy="4.800" r="1.200"/><circle cx="10" cy="10" r="1.200"/><circle cx="10" cy="15.200" r="1.200"/></g></svg>
 <div class="abs" style="left:1559px;top:39px;width:26px;height:2px;background:#6c707e;border-radius:1px"></div>
</div>
<div id="dtabs" class="abs">
 <div class="t" id="t_tv" style="left:26px;top:14.500px">Threads &amp; Variables</div>
 <div class="abs" style="left:0;top:66px;width:300px;height:4.500px;background:#3a78f2"></div>
 <div class="t" id="t_console" style="left:324px;top:14.500px">Console</div>
 <svg style="left:474px;top:18px" width="32" height="32" viewBox="0 0 16 16"><g fill="none" stroke="#6c707e" stroke-width="1" stroke-linecap="round" stroke-linejoin="round"><rect x="1.400" y="2.400" width="13.200" height="11.200" rx="1.600" fill="#ebecf0"/><path d="M4.200 5.800l2.300 2-2.300 2M8 10.600h3"/></g></svg>
 <div class="t" id="t_lldb" style="left:516px;top:14.500px">LLDB</div>
 <div class="t" id="t_mem" style="left:632px;top:14.500px">Memory View</div>
 <!-- rerun debug -->
 <svg style="left:832px;top:14px" width="40" height="40" viewBox="910 832 40 40"><g transform="translate(927.8 851.6) scale(0.956)" fill="none" stroke-width="2.1" stroke-linecap="butt" stroke-linejoin="miter"><path d="M10.500 -4.400A11.400 11.400 0 1 0 -0.200 11.400" stroke="#6c707e"/><path d="M11.700 -14.200V-4.900H2.200" stroke="#6c707e"/><g stroke="#208a3c" stroke-linecap="round"><circle cx="8.500" cy="10.500" r="5.200" fill="#eaf7ec"/><path d="M4.700 6.600V5.600A3.800 4.300 0 0 1 12.300 5.600V6.600"/><path d="M0.700 5L4.300 7.400M16.300 5L12.700 7.400M0.700 16.500L4.600 13.900M16.300 16.500L12.400 13.900"/></g></g></svg>
 <!-- stop -->
 <svg style="left:886px;top:18px" width="32" height="32" viewBox="0 0 16 16"><rect x="2.400" y="2.400" width="11.200" height="11.200" rx="1.800" fill="#ffeef0" stroke="#db3b4b" stroke-width="1"/></svg>
 <div class="abs" style="left:934.500px;top:14px;width:1.500px;height:40px;background:#dfe1e5"></div>
 <!-- resume -->
 <svg style="left:950px;top:16px" width="36" height="36" viewBox="0 0 18 18"><g fill="#eaf6ea" stroke="#2b9638" stroke-width="1.100" stroke-linejoin="round"><rect x="2.300" y="3.300" width="2.700" height="11.400" rx=".700"/><path d="M8 4v10a.500.500 0 0 0 .800.400l7-5a.500.500 0 0 0 0-.800l-7-5A.500.500 0 0 0 8 4z"/></g></svg>
 <!-- pause -->
 <svg style="left:1004px;top:18px" width="32" height="32" viewBox="0 0 16 16"><g fill="#f2f3f5" stroke="#c4c6cc" stroke-width="1"><rect x="3.300" y="2.400" width="3" height="11.200" rx=".600"/><rect x="9.700" y="2.400" width="3" height="11.200" rx=".600"/></g></svg>
 <!-- step over -->
 <svg style="left:1056px;top:18px" width="32" height="32" viewBox="0 0 16 16"><g fill="none" stroke="#6c707e" stroke-width="1" stroke-linecap="round" stroke-linejoin="round"><path d="M2.200 14.300h11.600M2.500 9l4.500-5 6.300 6M8.600 10.400h4.900V5.500"/></g></svg>
 <!-- step into -->
 <svg style="left:1108px;top:18px" width="32" height="32" viewBox="0 0 16 16"><g fill="none" stroke="#6c707e" stroke-width="1" stroke-linecap="round" stroke-linejoin="round"><path d="M2.200 14.300h11.600M8 1.500v9.500M3.800 7l4.200 4.200L12.200 7"/></g></svg>
 <!-- step out -->
 <svg style="left:1160px;top:18px" width="32" height="32" viewBox="0 0 16 16"><g fill="none" stroke="#6c707e" stroke-width="1" stroke-linecap="round" stroke-linejoin="round"><path d="M2.200 14.300h11.600M8 11.200V1.800M3.800 6l4.200-4.200L12.200 6"/></g></svg>
 <div class="abs" style="left:1208.500px;top:14px;width:1.500px;height:40px;background:#dfe1e5"></div>
 <!-- view breakpoints -->
 <svg style="left:1226px;top:18px" width="32" height="32" viewBox="0 0 16 16"><g stroke="#db3b4b" stroke-width="1"><circle cx="9.800" cy="6" r="4.200" fill="none"/><circle cx="6" cy="9.800" r="4.400" fill="#ffeef0"/></g></svg>
 <!-- mute -->
 <svg style="left:1278px;top:18px" width="32" height="32" viewBox="0 0 16 16"><circle cx="8" cy="8.200" r="4.700" fill="#ffeef0" stroke="#db3b4b" stroke-width="1"/><path d="M2.300 13.700L13.700 2.300" stroke="#f7f8fa" stroke-width="3"/><path d="M2.300 13.700L13.700 2.300" stroke="#6c707e" stroke-width="1" stroke-linecap="round"/></svg>
 <svg style="left:1326px;top:14px" width="40" height="40" viewBox="0 0 20 20"><g fill="#6c707e"><circle cx="10" cy="4.800" r="1.200"/><circle cx="10" cy="10" r="1.200"/><circle cx="10" cy="15.200" r="1.200"/></g></svg>
 <!-- layout -->
 <svg style="left:1576px;top:18px" width="32" height="32" viewBox="0 0 16 16"><g fill="none" stroke="#6c707e" stroke-width="1" stroke-linejoin="round"><rect x="2.200" y="2.300" width="11.600" height="11.400" rx="1.600"/><path d="M6.700 2.300v11.400M6.700 7.500h7.100"/></g></svg>
</div>
<div id="frames" class="abs">
 <div class="abs" style="left:0;top:0;width:852px;height:58px;background:#fff;border-bottom:2px solid #ebecf0"></div>
 <svg style="left:19px;top:14px" width="30" height="26" viewBox="0 0 30 26"><path d="M2.500 13.500l8 8L27.500 3" fill="none" stroke="#f2905a" stroke-width="4.600" stroke-linejoin="miter"/></svg>
 <div class="t" id="t_thread" style="left:56px;top:8.500px">Thread-6 (5963458)</div>
 <svg style="left:815px;top:24px" width="18" height="12" viewBox="0 0 18 12"><path d="M1.500 2.500 9 10 16.500 2.500" fill="none" stroke="#6c707e" stroke-width="1.800" stroke-linecap="round" stroke-linejoin="round"/></svg>
 <div class="abs" style="left:0;top:66px;width:852px;height:418px;overflow:hidden">
<!--FROWS-->
  <div class="fr" style="top:0px;background:#dfe1e5"><span class="fl" id="f1a">mandelbrot::render</span><i class="fl" id="f1b" style="margin-left:8px;color:#000">main.rs:122</i></div>
  <div class="fr" style="top:48px"><span class="fl" id="f2a">mandelbrot::main::{{closure}}</span><i class="fl" id="f2b" style="margin-left:8px">main.rs:189</i></div>
  <div class="fr lib" style="top:96px"><span class="fl" id="f3a">core::ops::function::impls::&lt;impl core::ops::function::FnMut&lt;A&gt;</span><span class="fl" id="f3b" style="margin-left:8px">for &amp;F&gt;::call_mut</span><i class="fl" id="f3c" style="margin-left:8px">function.rs:272</i></div>
  <div class="fr lib" style="top:144px"><span class="fl" id="f4a">core::iter::traits::iterator::Iterator::for_each::call::{{closure}}</span><i class="fl" id="f4b" style="margin-left:8px">iterator.rs:853</i></div>
  <div class="fr lib" style="top:192px"><span class="fl" id="f5a">core::iter::traits::iterator::Iterator::fold</span><i class="fl" id="f5b" style="margin-left:8px">iterator.rs:2481</i></div>
  <div class="fr lib" style="top:240px"><span class="fl" id="f6a">core::iter::traits::iterator::Iterator::for_each</span><i class="fl" id="f6b" style="margin-left:8px">iterator.rs:856</i></div>
  <div class="fr lib" style="top:288px"><span class="fl" id="f7a">&lt;rayon::iter::for_each::ForEachConsumer&lt;F&gt;</span><span class="fl" id="f7b" style="margin-left:8px">as rayon::iter::plumbing::Folder&lt;T&gt;&gt;::consume_iter</span><i class="fl" id="f7c" style="margin-left:8px">for_each.rs:55</i></div>
  <div class="fr lib" style="top:336px"><span class="fl" id="f8a">rayon::iter::plumbing::Producer::fold_with</span><i class="fl" id="f8b" style="margin-left:8px">mod.rs:110</i></div>
  <div class="fr lib" style="top:384px"><span class="fl" id="f9a">rayon::iter::plumbing::bridge_producer_consumer::helper</span><i class="fl" id="f9b" style="margin-left:8px">mod.rs:438</i></div>
<!--/FROWS-->
 </div>
 <div class="t" id="t_hint" style="left:17px;top:486px;font-size:22px;letter-spacing:.600px;color:#818594">Switch frames from anywhere in the IDE with ⌥⌘<span style="font-family:'DejaVu Sans',sans-serif;letter-spacing:-1px">↑</span> and ⌥⌘<span style="font-family:'DejaVu Sans',sans-serif;letter-spacing:-1px">↓</span></div>
 <svg style="left:821px;top:499px" width="14" height="14" viewBox="0 0 14 14"><path d="M1.500 1.500l11 11M12.500 1.500l-11 11" stroke="#818594" stroke-width="1.500" stroke-linecap="round"/></svg>
</div>
<div id="vars" class="abs">
 <div class="abs" style="left:0;top:0;width:762px;height:58px;border-bottom:2px solid #ebecf0"></div>
 <div class="t mono" id="t_eval2" style="left:15.500px;top:8.500px;font-size:25.880px;letter-spacing:0;color:#818594">Evaluate expression (⏎) or add a w<span style="letter-spacing:.450px;margin-left:1.200px">...</span></div>
 <!-- add watch (disabled) -->
 <svg style="left:652px;top:10px" width="36" height="38" viewBox="1584 898 36 38"><g fill="none" stroke="#b7b8bc" stroke-width="2.200"><path d="M1600.900 902.300V920M1588 914.900H1614M1604.800 924.800H1609.200"/><circle cx="1600.900" cy="927" r="3.900"/><circle cx="1613.100" cy="927" r="3.900"/></g></svg>
 <svg style="left:722.500px;top:24px" width="18" height="12" viewBox="0 0 18 12"><path d="M1.500 2.500 9 10 16.500 2.500" fill="none" stroke="#6c707e" stroke-width="1.800" stroke-linecap="round" stroke-linejoin="round"/></svg>

 <div class="abs" id="vlist" style="left:0;top:66px;width:762px;height:463px">
<!--VROWS-->
  <svg style="left:34px;top:15px" width="12" height="18" viewBox="0 0 12 18"><path d="M2.500 2 9.500 9 2.500 16" fill="none" stroke="#6c707e" stroke-width="1.800" stroke-linecap="round" stroke-linejoin="round"/></svg>
  <svg style="left:71.500px;top:10.3px" width="22" height="29" viewBox="0 0 22 29"><g fill="#fffaeb" stroke="#c77d09" stroke-width="2"><rect x="1.600" y="1.300" width="18" height="5.400" rx="1.600"/><rect x="1.600" y="11.250" width="18" height="5.400" rx="1.600"/><rect x="1.600" y="21.200" width="18" height="5.400" rx="1.600"/></g></svg>
  <div class="vr" style="left:106px;top:0px"><span class="fl vn" id="v1a">pixels</span><span class="fl " id="v1b" style="margin-left:8px">=</span><span class="fl vg" id="v1c" style="margin-left:8px">{&amp;mut [u8]}</span><span class="fl " id="v1d" style="margin-left:8px">size=1000</span></div>
  <svg style="left:31.500px;top:67px" width="18" height="12" viewBox="0 0 18 12"><path d="M2 2.500 9 9.500 16 2.500" fill="none" stroke="#6c707e" stroke-width="1.800" stroke-linecap="round" stroke-linejoin="round"/></svg>
  <svg style="left:71.500px;top:58.3px" width="22" height="29" viewBox="0 0 22 29"><g fill="#fffaeb" stroke="#c77d09" stroke-width="2"><rect x="1.600" y="1.300" width="18" height="5.400" rx="1.600"/><rect x="1.600" y="11.250" width="18" height="5.400" rx="1.600"/><rect x="1.600" y="21.200" width="18" height="5.400" rx="1.600"/></g></svg>
  <div class="vr" style="left:106px;top:48px"><span class="fl vn" id="v2a">bounds</span><span class="fl " id="v2b" style="margin-left:8px">=</span><span class="fl vg" id="v2c" style="margin-left:8px">{(usize, usize)}</span></div>
  <div class="bin" style="left:110px;top:104.5px">10<br>01</div>
  <div class="vr" style="left:144px;top:96px"><span class="fl vn" id="v3a">0</span><span class="fl " id="v3b" style="margin-left:8px">=</span><span class="fl vg" id="v3c" style="margin-left:8px">{usize}</span><span class="fl " id="v3d" style="margin-left:8px">1000</span><span class="fl " id="v3e" style="margin-left:8px"><span class="vg">[0x</span>3e8<span class="vg">]</span></span></div>
  <div class="bin" style="left:110px;top:152.5px">10<br>01</div>
  <div class="vr" style="left:144px;top:144px"><span class="fl vn" id="v4a">1</span><span class="fl " id="v4b" style="margin-left:8px">=</span><span class="fl vg" id="v4c" style="margin-left:8px">{usize}</span><span class="fl " id="v4d" style="margin-left:8px">1</span><span class="fl " id="v4e" style="margin-left:8px"><span class="vg">[0x</span>1<span class="vg">]</span></span></div>
  <svg style="left:34px;top:207px" width="12" height="18" viewBox="0 0 12 18"><path d="M2.500 2 9.500 9 2.500 16" fill="none" stroke="#6c707e" stroke-width="1.800" stroke-linecap="round" stroke-linejoin="round"/></svg>
  <svg style="left:71.500px;top:202.3px" width="22" height="29" viewBox="0 0 22 29"><g fill="#fffaeb" stroke="#c77d09" stroke-width="2"><rect x="1.600" y="1.300" width="18" height="5.400" rx="1.600"/><rect x="1.600" y="11.250" width="18" height="5.400" rx="1.600"/><rect x="1.600" y="21.200" width="18" height="5.400" rx="1.600"/></g></svg>
  <div class="vr" style="left:106px;top:192px"><span class="fl vn" id="v5a">upper_left</span><span class="fl " id="v5b" style="margin-left:8px">=</span><span class="fl vg" id="v5c" style="margin-left:8px">{num_complex::Complex&lt;f64&gt;}</span></div>
  <svg style="left:34px;top:255px" width="12" height="18" viewBox="0 0 12 18"><path d="M2.500 2 9.500 9 2.500 16" fill="none" stroke="#6c707e" stroke-width="1.800" stroke-linecap="round" stroke-linejoin="round"/></svg>
  <svg style="left:71.500px;top:250.3px" width="22" height="29" viewBox="0 0 22 29"><g fill="#fffaeb" stroke="#c77d09" stroke-width="2"><rect x="1.600" y="1.300" width="18" height="5.400" rx="1.600"/><rect x="1.600" y="11.250" width="18" height="5.400" rx="1.600"/><rect x="1.600" y="21.200" width="18" height="5.400" rx="1.600"/></g></svg>
  <div class="vr" style="left:106px;top:240px"><span class="fl vn" id="v6a">lower_right</span><span class="fl " id="v6b" style="margin-left:8px">=</span><span class="fl vg" id="v6c" style="margin-left:8px">{num_complex::Complex&lt;f64&gt;}</span></div>
  <div class="bin" style="left:72px;top:296.5px">10<br>01</div>
  <div class="vr" style="left:106px;top:288px"><span class="fl vn" id="v7a">row</span><span class="fl " id="v7b" style="margin-left:8px">=</span><span class="fl vg" id="v7c" style="margin-left:8px">{usize}</span><span class="fl " id="v7d" style="margin-left:8px">0</span><span class="fl " id="v7e" style="margin-left:8px"><span class="vg">[0x</span>0<span class="vg">]</span></span></div>
  <div class="bin" style="left:72px;top:344.5px">10<br>01</div>
  <div class="vr" style="left:106px;top:336px"><span class="fl vn" id="v8a">column</span><span class="fl " id="v8b" style="margin-left:8px">=</span><span class="fl vg" id="v8c" style="margin-left:8px">{usize}</span><span class="fl " id="v8d" style="margin-left:8px">0</span><span class="fl " id="v8e" style="margin-left:8px"><span class="vg">[0x</span>0<span class="vg">]</span></span></div>
<!--/VROWS-->
 </div>
</div>
<div id="status" class="abs">
 <div class="abs" style="left:24px;top:22px;width:16px;height:16px;border:2.200px solid #3574f0;border-radius:4px;background:#e7effd"></div>
 <div class="t" id="t_s1" style="left:48px;top:7.5px">mandelbrot</div>
 <svg style="left:207px;top:19.5px" width="14" height="20" viewBox="0 0 14 20"><path d="M3 3l8 7-8 7" fill="none" stroke="#818594" stroke-width="1.800" stroke-linecap="round" stroke-linejoin="round"/></svg>
 <div class="t" id="t_s2" style="left:238px;top:7.5px">src</div>
 <svg style="left:293px;top:19.5px" width="14" height="20" viewBox="0 0 14 20"><path d="M3 3l8 7-8 7" fill="none" stroke="#818594" stroke-width="1.800" stroke-linecap="round" stroke-linejoin="round"/></svg>
 <svg style="left:324px;top:12px" width="32" height="32" viewBox="324 1429 32 32"><circle cx="340" cy="1445" r="13" fill="#fff" stroke="#e66d17" stroke-width="2"/><text transform="translate(340.39 1450.79) scale(1.120 1)" font-family="Liberation Serif,serif" font-weight="bold" font-size="19.5" text-anchor="middle" fill="#e66d17" stroke="#e66d17" stroke-width="0.455">R</text><path d="M328.82 1449.42H351.96" stroke="#e66d17" stroke-width="2.6"/><path d="M328.82 1441.3H334.8" stroke="#e66d17" stroke-width="2.08"/></svg>
 <div class="t" id="t_s3" style="left:364px;top:7.5px">main.rs</div>
 <!-- gear -->
 <svg style="left:1068px;top:14.5px" width="28" height="28" viewBox="0 0 24 24"><path fill="#6c707e" d="M19.430 12.980c.040-.320.070-.640.070-.980s-.030-.660-.070-.980l2.110-1.650c.190-.150.240-.420.120-.640l-2-3.460c-.120-.220-.390-.300-.610-.220l-2.490 1c-.520-.400-1.080-.730-1.690-.980l-.380-2.650C14.460 2.180 14.250 2 14 2h-4c-.250 0-.460.180-.490.420l-.380 2.650c-.610.250-1.170.590-1.690.980l-2.490-1c-.230-.090-.490 0-.610.220l-2 3.460c-.130.220-.070.490.120.640l2.110 1.650c-.40.320-.70.650-.70.980s.30.660.70.980l-2.110 1.650c-.190.150-.240.420-.120.640l2 3.460c.120.220.390.300.610.220l2.490-1c.520.400 1.080.730 1.690.980l.380 2.650c.30.240.240.420.490.420h4c.250 0 .460-.180.490-.420l.380-2.650c.610-.250 1.170-.590 1.690-.980l2.490 1c.230.090.490 0 .610-.220l2-3.460c.120-.220.070-.490-.120-.640l-2.110-1.650zM12 15.500c-1.930 0-3.500-1.570-3.500-3.500s1.570-3.500 3.500-3.500 3.500 1.570 3.500 3.500-1.570 3.500-3.500 3.500z"/></svg>
 <div class="t" id="t_s4" style="left:1102px;top:7.5px">Cargo Check</div>
 <div class="t" id="t_s5" style="left:1291px;top:7.5px">121:9</div>
 <div class="t" id="t_s6" style="left:1388px;top:7.5px">LF</div>
 <div class="t" id="t_s7" style="left:1450px;top:7.5px">UTF-8</div>
 <div class="t" id="t_s8" style="left:1562px;top:7.5px">4 spaces</div>
 <svg style="left:1708px;top:14.5px" width="32" height="32" viewBox="0 0 16 16"><g fill="none" stroke="#6c707e" stroke-width="1" stroke-linecap="round" stroke-linejoin="round"><rect x="2.300" y="6.500" width="9.400" height="7.200" rx="1.500"/><path d="M7 9.200v2M9.300 6.500V4.700a2.700 2.700 0 0 1 5.400 0v.800"/></g></svg>
</div>
<div class="abs" id="topline" style="left:0;top:76px;width:1771px;height:2px;background:#ebecf0;z-index:4"></div>
<div class="corner" style="left:0;top:0;z-index:9;background:radial-gradient(circle at 100% 100%,rgba(255,255,255,0) 9.500px,#fff 10.500px)"></div>
<div class="corner" style="left:1761px;top:0;z-index:9;background:radial-gradient(circle at 0 100%,rgba(255,255,255,0) 9.500px,#fff 10.500px)"></div>
<div class="corner" style="left:0;top:1464px;width:9px;height:9px;z-index:9;background:radial-gradient(circle at 100% 0,rgba(0,0,0,0) 8.500px,#000 9.500px)"></div>
<div class="corner" style="left:1762px;top:1464px;width:9px;height:9px;z-index:9;background:radial-gradient(circle at 0 0,rgba(0,0,0,0) 8.500px,#000 9.500px)"></div>
</body>
</html>
